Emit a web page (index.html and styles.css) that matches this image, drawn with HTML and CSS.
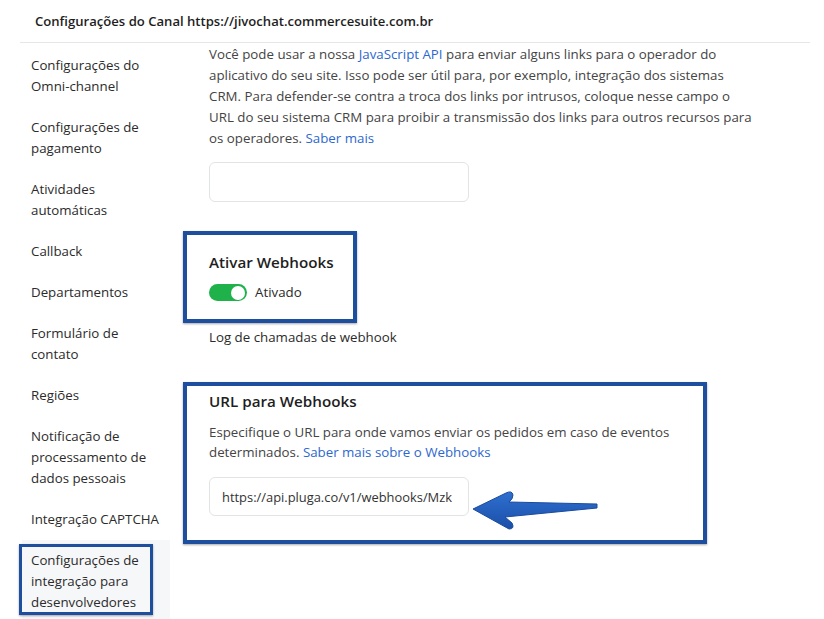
FILE: index.html
```html
<!DOCTYPE html>
<html lang="pt-BR">
<head>
    <meta charset="UTF-8">
    <title>Configurações do Canal</title>
    <link rel="stylesheet" href="styles.css">
</head>
<body>

    <!-- Page header -->
    <div class="page-header">
        <h1>Configurações do Canal https://jivochat.commercesuite.com.br</h1>
    </div>

    <div class="layout">
        <!-- Settings menu -->
        <ul class="side-menu">
            <li>Configurações do Omni-channel</li>
            <li>Configurações de pagamento</li>
            <li>Atividades automáticas</li>
            <li>Callback</li>
            <li>Departamentos</li>
            <li>Formulário de contato</li>
            <li>Regiões</li>
            <li>Notificação de processamento de dados pessoais</li>
            <li>Integração CAPTCHA</li>
            <li class="active"><span class="mark"></span>Configurações de integração para desenvolvedores</li>
        </ul>

        <!-- Developer settings -->
        <div class="content">
            <p class="text">Você pode usar a nossa <a href="#">JavaScript API</a> para enviar alguns links para o operador do aplicativo do seu site. Isso pode ser útil para, por exemplo, integração dos sistemas CRM. Para defender-se contra a troca dos links por intrusos, coloque nesse campo o URL do seu sistema CRM para proibir a transmissão dos links para outros recursos para os operadores. <a href="#">Saber mais</a></p>
            <input class="field" type="text">

            <div class="boxed webhook-toggle">
                <h2>Ativar Webhooks</h2>
                <label class="switch-row">
                    <span class="switch"><span class="knob"></span></span>
                    Ativado
                </label>
            </div>

            <div class="log-link">Log de chamadas de webhook</div>

            <div class="boxed webhook-url">
                <h2>URL para Webhooks</h2>
                <p class="text">Especifique o URL para onde vamos enviar os pedidos em caso de eventos determinados. <a href="#">Saber mais sobre o Webhooks</a></p>
                <div class="url-row">
                    <input class="field" type="text" value="https://api.pluga.co/v1/webhooks/Mzk">
                    <svg class="arrow" width="132" height="48" viewBox="0 0 132 48">
                        <defs>
                            <linearGradient id="arrowFill" x1="0" y1="0" x2="0" y2="1">
                                <stop offset="0" stop-color="#2f6fd0"/>
                                <stop offset="1" stop-color="#1a4fa8"/>
                            </linearGradient>
                        </defs>
                        <path d="M5,21 L38,5 Q44,2 45,7 Q45,11 41,14 L129,16 L129,20 L37,29 L44,35 Q47,41 41,41 Z" fill="url(#arrowFill)" stroke="#1a4c9c" stroke-width="1" stroke-linejoin="round"/>
                    </svg>
                </div>
            </div>
        </div>
    </div>

</body>
</html>
```

FILE: styles.css
```css
/* Reset */
* {
    margin: 0;
    padding: 0;
    box-sizing: border-box;
}

body {
    font-family: "Open Sans", "Noto Sans", Arial, sans-serif;
    font-size: 13.3px;
    color: #333;
    background-color: #fff;
    width: 824px;
    height: 619px;
    overflow: hidden;
}

a {
    color: #2c68cf;
    text-decoration: none;
}

/* Header */
.page-header {
    margin: 0 14px 0 20px;
    height: 43px;
    padding: 0 15px;
    border-bottom: 1px solid #e4e6e8;
    display: flex;
    align-items: center;
}

.page-header h1 {
    font-size: 13.1px;
    font-weight: 600;
    color: #1e1e1e;
}

/* Two columns */
.layout {
    display: flex;
    gap: 39px;
    margin-top: 1px;
}

/* Side menu */
.side-menu {
    list-style: none;
    width: 150px;
    margin-left: 20px;
    padding-top: 1px;
}

.side-menu li {
    position: relative;
    padding: 10px 4px 10px 11px;
    line-height: 21px;
    color: #2b2b2b;
}

.side-menu li.active {
    background-color: #f6f7f9;
    margin-left: 2px;
    padding-left: 9px;
    padding-right: 12px;
}

/* annotation frame over the active item */
.side-menu .mark {
    position: absolute;
    left: -3px;
    top: 4px;
    width: 134px;
    height: 71px;
    border: 3px solid #1d4f9e;
    box-shadow: 0 1px 2px rgba(0, 0, 0, 0.35);
}

/* Content */
.content {
    width: 547px;
    color: #444;
}

.text {
    line-height: 21px;
}

.field {
    display: block;
    width: 260px;
    height: 40px;
    margin-top: 13px;
    padding: 0 8px 0 12px;
    border: 1px solid #e2e3e5;
    border-radius: 6px;
    font-family: inherit;
    font-size: 12.9px;
    color: #333;
    background-color: #fff;
}

/* annotated sections */
.boxed {
    margin-left: -26px;
    border: 4px solid #1d4f9e;
    box-shadow: 0 1px 2px rgba(0, 0, 0, 0.35);
    padding-left: 22px;
}

.boxed h2 {
    font-size: 15.2px;
    font-weight: 600;
    color: #1e1e1e;
    line-height: 21px;
}

.webhook-toggle {
    width: 174px;
    margin-top: 29px;
    padding-top: 17px;
    padding-bottom: 16px;
}

.switch-row {
    display: flex;
    align-items: center;
    gap: 8px;
    margin-top: 9px;
    line-height: 21px;
    color: #2b2b2b;
}

.switch {
    width: 38px;
    height: 17px;
    border-radius: 9px;
    background-color: #1fb24b;
    display: flex;
    justify-content: flex-end;
    align-items: center;
    padding-right: 2px;
}

.knob {
    width: 14px;
    height: 14px;
    border-radius: 50%;
    background-color: #fff;
}

.log-link {
    margin-top: 4px;
    line-height: 21px;
    color: #2b2b2b;
}

.webhook-url {
    width: 524px;
    margin-top: 34px;
    padding-top: 5px;
    padding-bottom: 24px;
}

.webhook-url .text {
    margin-top: 10px;
    line-height: 20px;
}

.url-row {
    position: relative;
}

.url-row .field {
    margin-top: 15px;
    height: 39px;
}

.arrow {
    position: absolute;
    left: 259px;
    top: 11px;
}
```
